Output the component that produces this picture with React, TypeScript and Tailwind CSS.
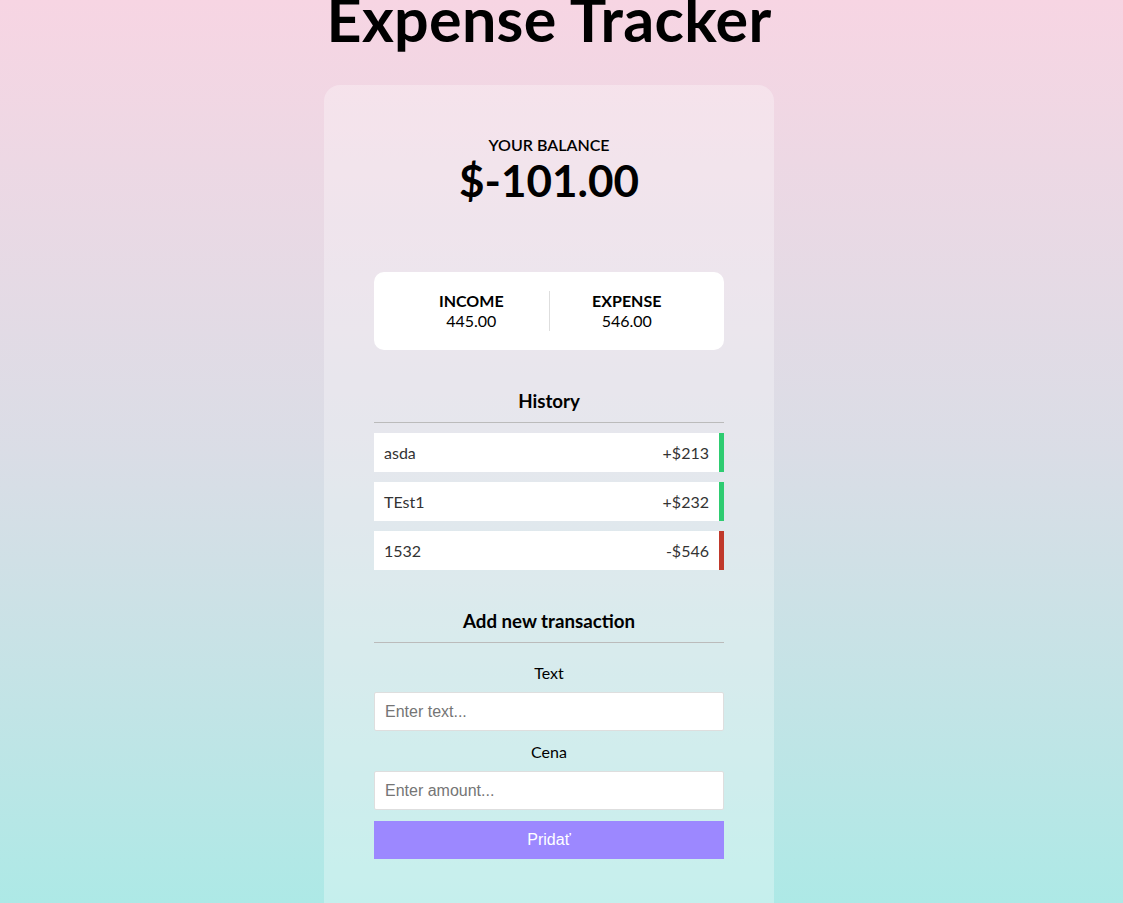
import React from 'react';

type Tx = { id: number; text: string; amount: number };

const transactions: Tx[] = [
  { id: 1, text: 'asda', amount: 213 },
  { id: 2, text: 'TEst1', amount: 232 },
  { id: 3, text: '1532', amount: -546 },
];

const App = () => {
  return (
    <div className="h-[903px] overflow-hidden bg-gradient-to-b from-[#f7d5e3] via-[#dadde6] to-[#ade9e6] font-['Lato',sans-serif] text-black">
      <div className="flex flex-col items-center pr-[25px]">
        {/* Title, clipped at the top of the viewport */}
        <h1 className="-mt-[12px] text-[61px] font-bold leading-none tracking-[0.3px]">Expense Tracker</h1>

        {/* Main card */}
        <div className="mt-[36px] h-[900px] w-[450px] rounded-2xl bg-white/30 px-[50px] pt-[50px]">
          <div className="flex flex-col items-center">
            <h4 className="text-base font-semibold uppercase leading-5">Your Balance</h4>
            <h2 className="-mt-[1px] text-[44px] font-bold leading-[52px]">$-101.00</h2>
          </div>

          {/* Income / expense */}
          <div className="mt-[66px] flex h-[78px] items-center rounded-[10px] bg-white px-5">
            <div className="flex flex-1 flex-col items-center border-r border-[#dedede]">
              <h4 className="text-base font-bold uppercase leading-5">Income</h4>
              <p className="text-base leading-5">445.00</p>
            </div>
            <div className="flex flex-1 flex-col items-center">
              <h4 className="text-base font-bold uppercase leading-5">Expense</h4>
              <p className="text-base leading-5">546.00</p>
            </div>
          </div>

          {/* History */}
          <h3 className="mt-[39px] border-b border-[#bbb] pb-[9px] text-center text-[18.72px] font-bold leading-6">
            History
          </h3>
          <ul className="mt-[10px] flex flex-col gap-[10px]">
            {transactions.map((t) => (
              <li
                key={t.id}
                className={`flex h-[39px] items-center justify-between border-r-[5px] bg-white px-[10px] text-base text-[#333] ${
                  t.amount < 0 ? 'border-[#c0392b]' : 'border-[#2ecc71]'
                }`}
              >
                <span>{t.text}</span>
                <span>{t.amount < 0 ? `-$${Math.abs(t.amount)}` : `+$${t.amount}`}</span>
              </li>
            ))}
          </ul>

          {/* Add transaction */}
          <h3 className="mt-[39px] border-b border-[#bbb] pb-[9px] text-center text-[18.72px] font-bold leading-6">
            Add new transaction
          </h3>
          <form className="mt-[20px] flex flex-col">
            <label className="text-center text-base leading-5">Text</label>
            <input
              type="text"
              placeholder="Enter text..."
              className="mt-[9px] h-[39px] w-full rounded-[2px] border border-[#dedede] bg-white px-[10px] font-['Liberation_Sans',Arial,sans-serif] text-base outline-none placeholder:text-[#757575]"
            />
            <label className="mt-[11px] text-center text-base leading-5">Cena</label>
            <input
              type="number"
              placeholder="Enter amount..."
              className="mt-[9px] h-[39px] w-full rounded-[2px] border border-[#dedede] bg-white px-[10px] font-['Liberation_Sans',Arial,sans-serif] text-base outline-none placeholder:text-[#757575]"
            />
            <button
              type="button"
              className="mt-[11px] h-[38px] w-full bg-[#9c88ff] font-['Liberation_Sans',Arial,sans-serif] text-base text-white"
            >
              Pridať
            </button>
          </form>
        </div>
      </div>
    </div>
  );
};

export default App;
